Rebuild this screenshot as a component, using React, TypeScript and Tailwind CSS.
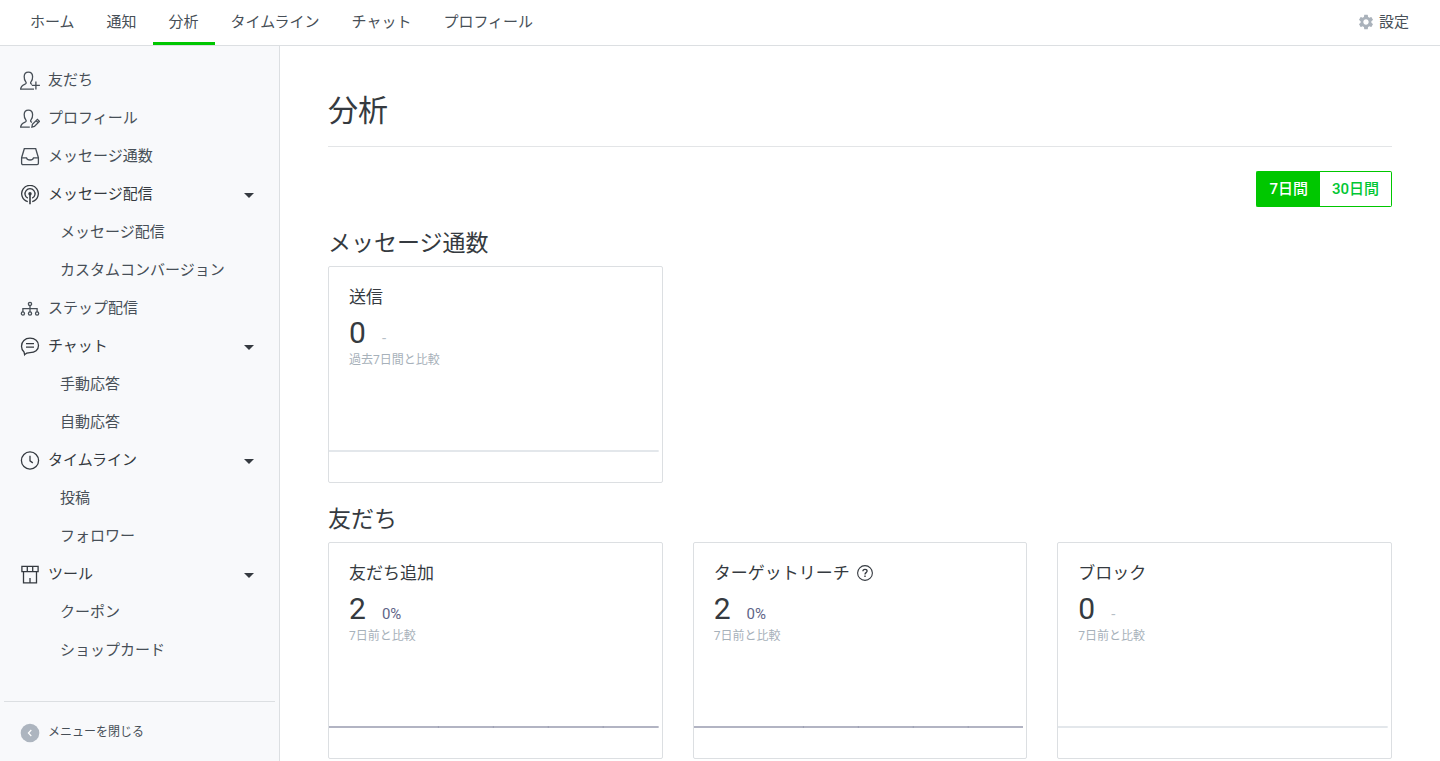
import type { ReactNode } from "react";
import { MdSettings } from "react-icons/md";

const tabs = ["ホーム", "通知", "分析", "タイムライン", "チャット", "プロフィール"];

function Icon({ children }: { children: ReactNode }) {
  return (
    <svg
      viewBox="0 0 20 20"
      className="mt-0.5 size-5 shrink-0"
      fill="none"
      stroke="currentColor"
      strokeWidth="1.3"
      aria-hidden="true"
    >
      {children}
    </svg>
  );
}

const personPath =
  "M12 13.300c-1.500-.6-1.800-1.500-1-2.500 1.200-1.500 1.700-3.200 1.600-5.200C12.500 2.800 10.900 1.200 8.400 1.200S4.300 2.800 4.200 5.600c-.1 2 .4 3.700 1.600 5.200.8 1 .4 1.900-1.200 2.500C2 14.300.8 15.400.7 18.200";

const FriendIcon = (
  <Icon>
    <path d={personPath} />
    <path d="M.1 18.200H14M11.800 14.400h8.100M15.900 10.400v8" />
  </Icon>
);

const ProfileIcon = (
  <Icon>
    <path d={personPath} />
    <path d="M.1 18.200H9.800M11.900 18.100l.5-2.700 5-5 2 2-5 5zM16.200 11.700l2 2" />
  </Icon>
);

const InboxIcon = (
  <Icon>
    <path d="M4.300 1.700h11.400l2.700 9v5.600c0 .8-.5 1.300-1.300 1.300H2.900c-.8 0-1.300-.5-1.300-1.300v-5.600z" />
    <path d="M1.600 10.800h4.900c.3 1.300 1.600 2.200 3.500 2.200s3.200-.9 3.500-2.200h4.900" />
  </Icon>
);

const BroadcastIcon = (
  <Icon>
    <path d="M7.800 16.700A8.300 8.300 0 1 1 12.200 16.700" />
    <path d="M7.800 13.200A5 5 0 1 1 12.200 13.200" />
    <circle cx="10" cy="8.700" r="1.700" fill="currentColor" stroke="none" />
    <path d="M10 9v10.300" strokeWidth="1.600" />
  </Icon>
);

const StepIcon = (
  <Icon>
    <circle cx="10" cy="4.900" r="1.600" />
    <circle cx="2.900" cy="14.500" r="1.600" />
    <circle cx="10" cy="14.500" r="1.600" />
    <circle cx="17.100" cy="14.500" r="1.600" />
    <path d="M10 6.500v6.400M2.900 12.900V9.600h14.200v3.300" />
  </Icon>
);

const ChatIcon = (
  <Icon>
    <path d="M4.600 17.700 4 14.900C2.400 13.500 1.500 11.500 1.500 9.200c0-4.700 3.500-8 8.500-8s8.500 3 8.500 7.200c0 4.500-3.500 7.200-8.500 7.200-2.300 0-4 .3-5.400 2.100z" />
    <path d="M6 6.600h8M6 10.100h8" />
  </Icon>
);

const ClockIcon = (
  <Icon>
    <circle cx="10" cy="9.500" r="8.600" />
    <path d="M10 4.700v5.200l2.800 2" />
  </Icon>
);

const ShopIcon = (
  <Icon>
    <path d="M1.900 1.400h16.200v5.200H1.900zM7.300 1.400v5.200M12.700 1.400v5.200M3.500 6.600v11.200h13V6.600M10 13v4.800" />
  </Icon>
);

type Entry = { label: string; icon: ReactNode; children?: string[] };

const menu: Entry[] = [
  { label: "友だち", icon: FriendIcon },
  { label: "プロフィール", icon: ProfileIcon },
  { label: "メッセージ通数", icon: InboxIcon },
  { label: "メッセージ配信", icon: BroadcastIcon, children: ["メッセージ配信", "カスタムコンバージョン"] },
  { label: "ステップ配信", icon: StepIcon },
  { label: "チャット", icon: ChatIcon, children: ["手動応答", "自動応答"] },
  { label: "タイムライン", icon: ClockIcon, children: ["投稿", "フォロワー"] },
  { label: "ツール", icon: ShopIcon, children: ["クーポン", "ショップカード"] },
];

function MenuEntry({ entry }: { entry: Entry }) {
  if (!entry.children) {
    return (
      <li>
        <a href="#" className="flex h-[38px] items-center gap-2 px-5">
          {entry.icon}
          {entry.label}
        </a>
      </li>
    );
  }
  return (
    <li>
      <button type="button" aria-expanded="true" className="flex h-[38px] w-full items-center gap-2 pr-[25px] pl-5 text-[#353a40]">
        {entry.icon}
        {entry.label}
        <svg viewBox="0 0 10 5" className="mt-0.5 ml-auto h-[5px] w-2.5" fill="currentColor" aria-hidden="true">
          <path d="M0 0h10L5 5z" />
        </svg>
      </button>
      <ul>
        {entry.children.map((label) => (
          <li key={label}>
            <a href="#" className="flex h-[38px] items-center pl-[60px]">
              {label}
            </a>
          </li>
        ))}
      </ul>
    </li>
  );
}

type CardProps = { title: string; value: number; change?: string; note: string; help?: boolean };

function StatCard({ title, value, change, note, help }: CardProps) {
  const lineColor = change ? "text-[#b2b4c3]" : "text-[#e3e7eb]";
  return (
    <article className="rounded-xs border border-[#dcdfe2]">
      <div className="px-5 pt-[17px]">
        <h3 className="flex items-center gap-1.5 text-[17px] leading-[26px]">
          {title}
          {help && (
            <button type="button" aria-label="ヘルプ">
              <svg viewBox="0 0 18 18" className="size-[18px]" fill="none" stroke="currentColor" strokeWidth="1.1" aria-hidden="true">
                <circle cx="9" cy="9" r="7.400" />
                <path d="M6.900 7.300c0-1.300.9-2 2.100-2s2.100.7 2.100 1.800c0 1.600-2.100 1.500-2.100 3.300" strokeWidth="1.300" />
                <path d="M9 11.500v1.500" strokeWidth="1.400" />
              </svg>
            </button>
          )}
        </h3>
        <p className="flex h-[42px] items-baseline gap-4 leading-[46px]">
          <span className="text-[30px]">{value}</span>
          <span className={change ? "text-[15px] text-[#5e6487]" : "text-[15px] text-[#b7bfc7]"}>{change ?? "-"}</span>
        </p>
        <p className="text-xs leading-4 text-[#a7b1ba]">{note}</p>
      </div>
      <svg viewBox="0 0 330 114" preserveAspectRatio="none" className={`h-[114px] w-full pr-[3px] ${lineColor}`} aria-hidden="true">
        <path d="M0 83H330" stroke="currentColor" strokeWidth="2" />
        {change && <path d="M109.500 82v2M164.500 82v2M219.500 82v2M274.500 82v2" stroke="#9c9fb3" strokeWidth="1" />}
      </svg>
    </article>
  );
}

function Section({ title, children }: { title: string; children: ReactNode }) {
  return (
    <section className="mb-[19px] last:mb-0">
      <h2 className="mb-1 text-[23px] leading-9">{title}</h2>
      <div className="grid grid-cols-3 gap-[30px]">{children}</div>
    </section>
  );
}

export default function App() {
  return (
    <div className="flex min-h-screen flex-col bg-white font-[Roboto,'Noto_Sans_CJK_JP',sans-serif] text-[15px] text-[#353a40]" lang="ja">
      <header className="flex h-[46px] items-stretch justify-between border-b border-[#dcdfe2] pr-[31px] pl-[14px] text-[#474f57]">
        <nav className="flex">
          {tabs.map((tab) => (
            <a
              key={tab}
              href="#"
              aria-current={tab === "分析" ? "page" : undefined}
              className={
                tab === "分析"
                  ? "flex items-center border-b-[3px] border-[#00c700] px-4 pt-0.5"
                  : "flex items-center border-b-[3px] border-transparent px-4 pt-0.5"
              }
            >
              {tab}
            </a>
          ))}
        </nav>
        <a href="#" className="flex items-center gap-1 pb-px">
          <MdSettings className="size-[18px] text-[#aab2bb]" aria-hidden="true" />
          設定
        </a>
      </header>

      <div className="flex grow">
        <aside className="flex w-[280px] shrink-0 flex-col justify-between border-r border-[#dcdfe2] bg-[#f8f9fb] text-[#474f57]">
          <ul className="pt-[15px]">
            {menu.map((entry) => (
              <MenuEntry key={entry.label} entry={entry} />
            ))}
          </ul>
          <div className="mx-1 border-t border-[#dcdfe2]">
            <button type="button" className="flex h-[59px] items-center gap-2 px-4 text-xs">
              <svg viewBox="0 0 20 20" className="mt-0.5 size-5" aria-hidden="true">
                <circle cx="10" cy="10" r="9.300" fill="#adb5bf" />
                <path d="M11.300 7 8.400 10l2.900 3" fill="none" stroke="#fff" strokeWidth="1.200" />
              </svg>
              メニューを閉じる
            </button>
          </div>
        </aside>

        <main className="min-w-0 grow px-12 pt-[41px]">
          <h1 className="border-b border-[#e3e5e7] pb-[11px] text-[30px] leading-[48px]">分析</h1>
          <div className="mt-6 mb-[19px] flex justify-end font-medium">
            <button type="button" className="h-9 rounded-l-xs border border-r-0 border-[#00c700] bg-[#00c700] px-3 text-white">
              7日間
            </button>
            <button type="button" className="h-9 rounded-r-xs border border-l-0 border-[#00c700] px-3 text-[#00c733]">
              30日間
            </button>
          </div>
          <Section title="メッセージ通数">
            <StatCard title="送信" value={0} note="過去7日間と比較" />
          </Section>
          <Section title="友だち">
            <StatCard title="友だち追加" value={2} change="0%" note="7日前と比較" />
            <StatCard title="ターゲットリーチ" value={2} change="0%" note="7日前と比較" help />
            <StatCard title="ブロック" value={0} note="7日前と比較" />
          </Section>
        </main>
      </div>
    </div>
  );
}
